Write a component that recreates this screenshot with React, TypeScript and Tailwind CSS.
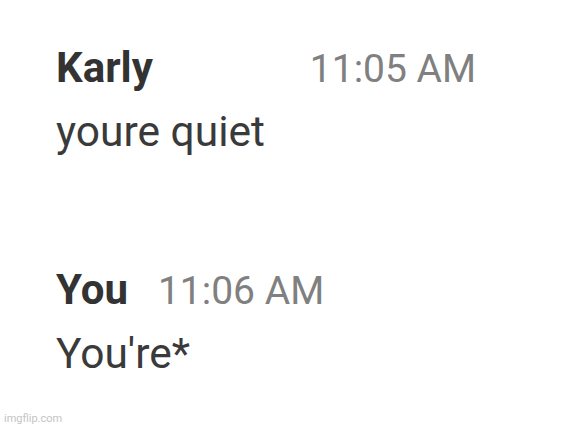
import React from 'react';

const messages = [
  { name: 'Karly', time: '11:05 AM', text: 'youre quiet', gap: 'ml-[157px]' },
  { name: 'You', time: '11:06 AM', text: "You're*", gap: 'ml-[30px]' },
];

export default function App() {
  return (
    <div className="relative w-[581px] h-[429px] bg-white overflow-hidden font-['Roboto',sans-serif]">
      <div className="flex flex-col pl-[56px] pt-[44px] gap-[109px]">
        {messages.map((m) => (
          <div key={m.name} className="flex flex-col">
            <div className="flex items-baseline">
              <span className="text-[42px] leading-[48px] font-bold text-[#333333]">{m.name}</span>
              <span className={`text-[39px] leading-[48px] text-[#808080] ${m.gap}`}>{m.time}</span>
            </div>
            <div className="mt-[14px] text-[42.5px] leading-[50px] text-[#3a3a3a]">{m.text}</div>
          </div>
        ))}
      </div>
      {/* watermark */}
      <div className="absolute left-[4px] bottom-[3px] text-[11px] leading-[14px] text-[#c4c4c4]">imgflip.com</div>
    </div>
  );
}
